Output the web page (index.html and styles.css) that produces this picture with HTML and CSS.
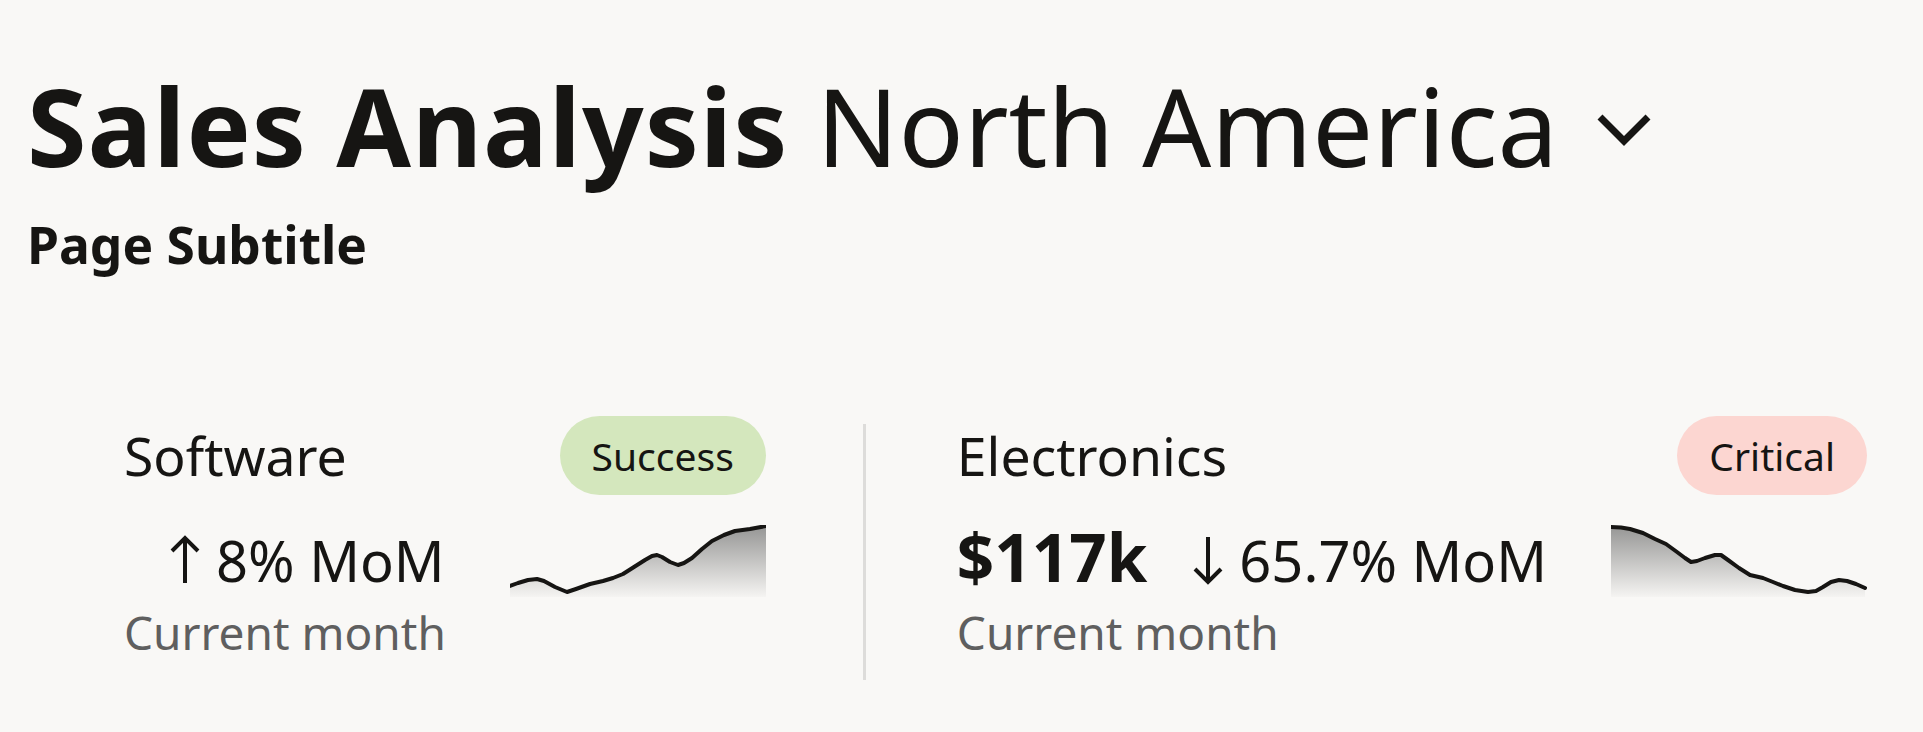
FILE: index.html
```html
<!DOCTYPE html>
<html lang="en">
<head>
    <meta charset="UTF-8">
    <meta name="viewport" content="width=device-width, initial-scale=1.0">
    <title>Sales Analysis</title>
    <link rel="stylesheet" href="styles.css">
</head>
<body>
    <!-- Page header -->
    <header class="page-header">
        <h1 class="page-title"><span class="title-main">Sales Analysis</span> North America<svg class="title-chevron" viewBox="0 0 56 34"><path d="M4 5 L28 29 L52 5" fill="none" stroke="#161513" stroke-width="7"/></svg></h1>
        <p class="page-subtitle">Page Subtitle</p>
    </header>

    <!-- Metric cards -->
    <section class="metrics">
        <div class="metric-card">
            <div class="metric-name">Software</div>
            <span class="badge badge-success">Success</span>
            <div class="metric-body">
                <div class="metric-value-row"><span class="metric-value"></span><span class="metric-trend"><svg class="trend-arrow" viewBox="0 0 30 50"><path d="M15 48 V3 M2 16 L15 3 L28 16" fill="none" stroke="#161513" stroke-width="4"/></svg>8% MoM</span></div>
                <div class="metric-period">Current month</div>
            </div>
            <svg class="sparkline" viewBox="0 0 256 72">
                <defs>
                    <linearGradient id="fill-up" x1="0" y1="0" x2="0" y2="72" gradientUnits="userSpaceOnUse">
                        <stop offset="0" stop-color="#949493"/>
                        <stop offset="1" stop-color="#f5f4f2"/>
                    </linearGradient>
                </defs>
                <polygon fill="url(#fill-up)" points="0,61 8,58 18,55 27,54 34,56 45,62 57,67 66,64 80,59 93,56 103,53 113,49 124,42 135,35 142,31 147,30 152,32 160,37 168,40 174,38 182,33 192,24 202,16 214,10 225,6 240,4 256,1 256,72 0,72"/>
                <polyline fill="none" stroke="#161513" stroke-width="4" stroke-linejoin="round" stroke-linecap="round" points="0,61 8,58 18,55 27,54 34,56 45,62 57,67 66,64 80,59 93,56 103,53 113,49 124,42 135,35 142,31 147,30 152,32 160,37 168,40 174,38 182,33 192,24 202,16 214,10 225,6 240,4 256,1"/>
            </svg>
        </div>

        <div class="metric-divider"></div>

        <div class="metric-card">
            <div class="metric-name">Electronics</div>
            <span class="badge badge-critical">Critical</span>
            <div class="metric-body">
                <div class="metric-value-row"><span class="metric-value">$117k</span><span class="metric-trend"><svg class="trend-arrow" viewBox="0 0 30 50"><path d="M15 2 V47 M2 34 L15 47 L28 34" fill="none" stroke="#161513" stroke-width="4"/></svg>65.7% MoM</span></div>
                <div class="metric-period">Current month</div>
            </div>
            <svg class="sparkline" viewBox="0 0 256 72">
                <defs>
                    <linearGradient id="fill-down" x1="0" y1="0" x2="0" y2="72" gradientUnits="userSpaceOnUse">
                        <stop offset="0" stop-color="#949493"/>
                        <stop offset="1" stop-color="#f5f4f2"/>
                    </linearGradient>
                </defs>
                <polygon fill="url(#fill-down)" points="0,2 10,2.5 19,4 32,8 44,14 55,19 66,27 74,33 80,37 86,36 94,33 104,30 110,30 117,35 128,43 139,50 152,53 162,57 172,61 184,65 197,67 205,66 212,62 220,57 228,55 236,56 245,59 254,63 254,72 0,72"/>
                <polyline fill="none" stroke="#161513" stroke-width="4" stroke-linejoin="round" stroke-linecap="round" points="0,2 10,2.5 19,4 32,8 44,14 55,19 66,27 74,33 80,37 86,36 94,33 104,30 110,30 117,35 128,43 139,50 152,53 162,57 172,61 184,65 197,67 205,66 212,62 220,57 228,55 236,56 245,59 254,63"/>
            </svg>
        </div>
    </section>
</body>
</html>
```

FILE: styles.css
```css
/* Base */
body {
    margin: 0;
    background: #f9f8f6;
    color: #161513;
    font-family: "Noto Sans", "Open Sans", sans-serif;
}

/* Header */
.page-header {
    padding: 72px 0 0 27px;
}

.page-title {
    margin: 0;
    font-size: 108px;
    font-weight: 400;
    line-height: 108px;
    white-space: nowrap;
}

.title-main {
    font-weight: 700;
    letter-spacing: 1px;
}

.title-chevron {
    width: 56px;
    height: 34px;
    margin-left: 38px;
    vertical-align: 21px;
}

.page-subtitle {
    margin: 38px 0 0;
    font-size: 51.5px;
    font-weight: 700;
    line-height: 52px;
}

/* Metric cards */
.metrics {
    display: flex;
    align-items: flex-start;
    padding: 146px 0 0 124px;
}

.metric-card {
    display: grid;
    grid-template-columns: auto 256px;
    column-gap: 64px;
    row-gap: 30px;
    align-items: center;
}

.metric-name {
    font-size: 53.5px;
    line-height: 53px;
}

.badge {
    justify-self: end;
    height: 79px;
    padding: 0 32px;
    border-radius: 40px;
    font-size: 39px;
    line-height: 79px;
}

.badge-success {
    background: #d4e7bd;
}

.badge-critical {
    background: #fcd6d1;
}

.metric-body {
    align-self: start;
}

.metric-value-row {
    font-size: 56px;
    line-height: 64px;
    white-space: nowrap;
}

.metric-value {
    font-size: 65.5px;
    font-weight: 700;
    margin-right: 46px;
}

.trend-arrow {
    width: 30px;
    height: 50px;
    margin-right: 16px;
    vertical-align: -3px;
}

.metric-period {
    margin-top: 18px;
    font-size: 46px;
    line-height: 45px;
    color: #5f5f5f;
}

.sparkline {
    display: block;
    align-self: start;
    width: 256px;
    height: 72px;
}

.metric-divider {
    width: 3px;
    height: 256px;
    margin: 8px 91px 0 97px;
    background: #dddcda;
}
```
